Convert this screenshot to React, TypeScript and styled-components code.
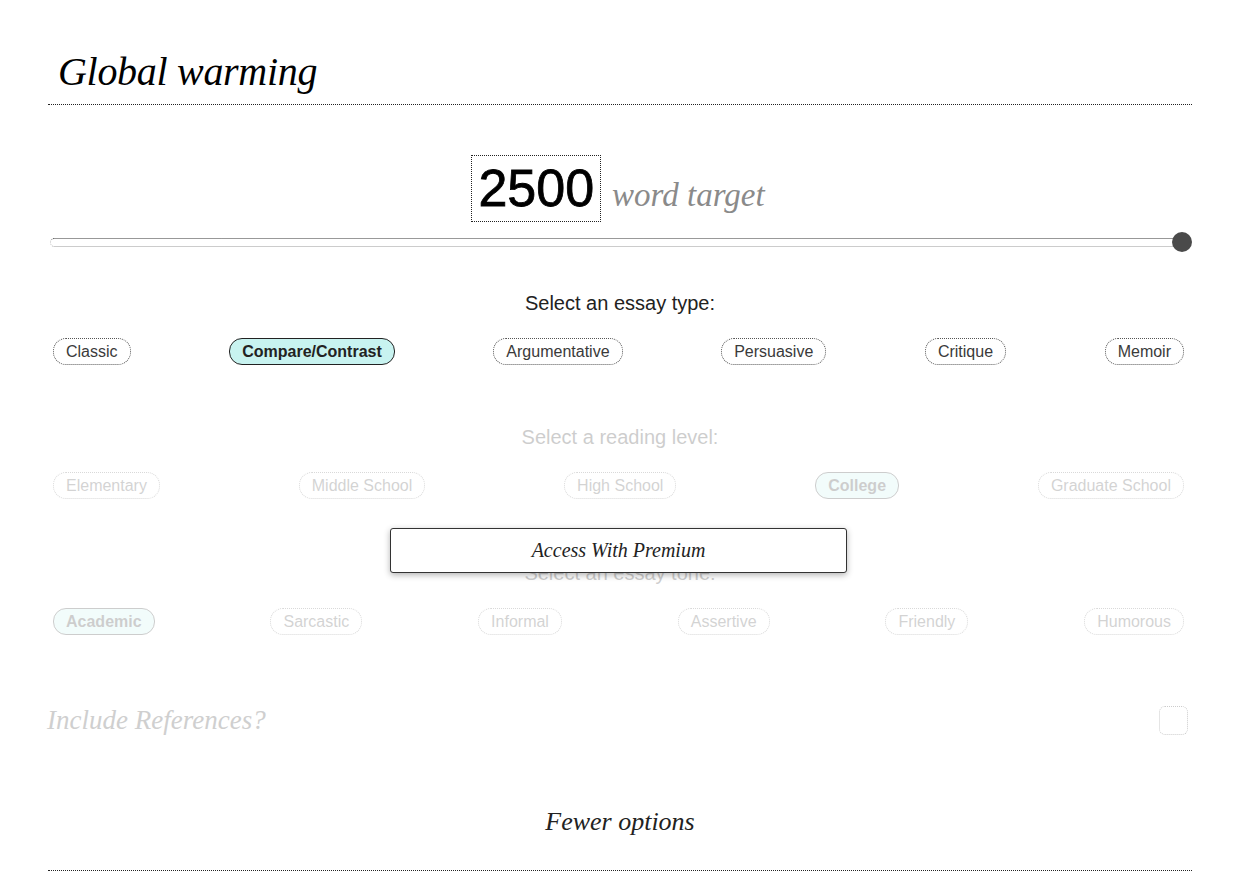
import React from 'react';
import styled, { createGlobalStyle } from 'styled-components';

const GlobalStyle = createGlobalStyle`
  body {
    margin: 0;
    background: #ffffff;
    font-family: "Liberation Sans", Arial, sans-serif;
  }
`;

const serif = `"Liberation Serif", "Times New Roman", serif`;

// -----------------------------------------------------------------------------
// Data
// -----------------------------------------------------------------------------
const essayTypes = ['Classic', 'Compare/Contrast', 'Argumentative', 'Persuasive', 'Critique', 'Memoir'];
const readingLevels = ['Elementary', 'Middle School', 'High School', 'College', 'Graduate School'];
const tones = ['Academic', 'Sarcastic', 'Informal', 'Assertive', 'Friendly', 'Humorous'];

// -----------------------------------------------------------------------------
// Styles
// -----------------------------------------------------------------------------
const Page = styled.div`
  padding: 49px 43px 0 48px;
  width: 1144px;
`;

const Header = styled.header`
  border-bottom: 1px dotted #222;
  padding: 0 0 9px 10px;
`;

const Title = styled.h1`
  margin: 0;
  font-family: ${serif};
  font-style: italic;
  font-weight: normal;
  font-size: 40px;
  line-height: 46px;
  letter-spacing: -0.3px;
  color: #000;
`;

const TargetRow = styled.div`
  display: flex;
  justify-content: center;
  align-items: baseline;
  gap: 11px;
  margin-top: 50px;
  padding-right: 4px;
`;

const WordCount = styled.div`
  border: 1px dotted #222;
  padding: 2px 6px 3px;
  font-size: 52px;
  line-height: 60px;
  color: #000;
  -webkit-text-stroke: 0.8px #000;
`;

const TargetLabel = styled.span`
  font-family: ${serif};
  font-style: italic;
  font-size: 33px;
  color: #8a8a8a;
`;

const SliderWrap = styled.div`
  position: relative;
  margin: 10px 0 0 2px;
  height: 20px;
  display: flex;
  align-items: center;
`;

const Track = styled.div`
  flex: 1;
  height: 7px;
  margin-right: 12px;
  border-top: 1px dotted #333;
  border-bottom: 1px dotted #999;
  border-left: 1px dotted #bbb;
  border-radius: 5px 0 0 5px;
`;

const Thumb = styled.div`
  position: absolute;
  right: 0;
  top: 0;
  width: 20px;
  height: 20px;
  border-radius: 50%;
  background: #4a4a4a;
`;

const Section = styled.section<{ $top: number }>`
  margin-top: ${(p) => p.$top}px;
`;

const Label = styled.div`
  text-align: center;
  font-size: 20px;
  line-height: 22px;
  color: #222;
`;

const PillRow = styled.div`
  display: flex;
  justify-content: space-between;
  margin: 24px 8px 0 5px;
`;

const Pill = styled.button<{ $active?: boolean }>`
  font-family: "Liberation Sans", Arial, sans-serif;
  font-size: 16px;
  height: 27px;
  padding: 0 12px;
  border-radius: 13px;
  background: ${(p) => (p.$active ? '#c8f3f0' : '#fff')};
  border: 1px ${(p) => (p.$active ? 'solid #222' : 'dotted #555')};
  font-weight: ${(p) => (p.$active ? 'bold' : 'normal')};
  color: ${(p) => (p.$active ? '#222' : '#3a3a3a')};
  cursor: pointer;
`;

const Locked = styled.div`
  position: relative;
  margin-top: 61px;
`;

const Faded = styled.div`
  opacity: 0.22;
`;

const PremiumButton = styled.button`
  position: absolute;
  top: 102px;
  left: 342px;
  width: 457px;
  height: 45px;
  background: #fff;
  border: 1px solid #333;
  border-radius: 3px;
  box-shadow: 0 2px 6px rgba(0, 0, 0, 0.3);
  font-family: ${serif};
  font-style: italic;
  font-size: 20px;
  color: #222;
  cursor: pointer;
`;

const RefsRow = styled.div`
  display: flex;
  justify-content: space-between;
  align-items: center;
  margin-top: 70px;
  padding-right: 4px;
`;

const RefsLabel = styled.span`
  font-family: ${serif};
  font-style: italic;
  font-size: 27px;
  color: #cfcfcf;
  margin-left: -1px;
`;

const Checkbox = styled.div`
  width: 27px;
  height: 27px;
  border: 1px dotted #ccc;
  border-radius: 6px;
`;

const Footer = styled.div`
  margin-top: 71px;
  padding-bottom: 33px;
  border-bottom: 1px dotted #222;
  text-align: center;
  font-family: ${serif};
  font-style: italic;
  font-size: 26px;
  line-height: 30px;
  color: #222;
`;

// -----------------------------------------------------------------------------
// Component
// -----------------------------------------------------------------------------
interface IChoices {
  label: string;
  options: string[];
  active: string;
  top: number;
}

const Choices = ({ label, options, active, top }: IChoices): JSX.Element => (
  <Section $top={top}>
    <Label>{label}</Label>
    <PillRow>
      {options.map((o) => (
        <Pill key={o} $active={o === active}>
          {o}
        </Pill>
      ))}
    </PillRow>
  </Section>
);

const App = (): JSX.Element => (
  <>
    <GlobalStyle />
    <Page>
      <Header>
        <Title>Global warming</Title>
      </Header>

      <TargetRow>
        <WordCount>2500</WordCount>
        <TargetLabel>word target</TargetLabel>
      </TargetRow>

      <SliderWrap>
        <Track />
        <Thumb />
      </SliderWrap>

      <Choices label="Select an essay type:" options={essayTypes} active="Compare/Contrast" top={40} />

      <Locked>
        <Faded>
          <Choices label="Select a reading level:" options={readingLevels} active="College" top={0} />
          <Choices label="Select an essay tone:" options={tones} active="Academic" top={63} />
        </Faded>
        <PremiumButton>Access With Premium</PremiumButton>
      </Locked>

      <RefsRow>
        <RefsLabel>Include References?</RefsLabel>
        <Checkbox />
      </RefsRow>

      <Footer>Fewer options</Footer>
    </Page>
  </>
);

export default App;
